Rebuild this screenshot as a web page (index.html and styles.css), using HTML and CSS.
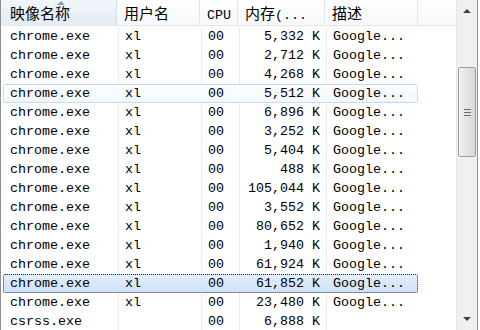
FILE: index.html
```html
<!DOCTYPE html>
<html lang="zh-CN">

<head>
    <meta charset="UTF-8">
    <title>进程</title>
    <link rel="stylesheet" href="styles.css">
</head>

<body>
    <div class="listview">
        <div class="list">
            <!-- 表头 -->
            <div class="header">
                <div class="col sorted"><span class="sort-arrow"></span>映像名称</div>
                <div class="col">用户名</div>
                <div class="col"><span class="ascii">CPU</span></div>
                <div class="col">内存<span class="ascii">(...</span></div>
                <div class="col">描述</div>
                <div class="col filler"></div>
            </div>

            <div class="rows">
                <div class="row"><span>chrome.exe</span><span>xl</span><span>00</span><span class="mem">5,332 K</span><span>Google...</span></div>
                <div class="row"><span>chrome.exe</span><span>xl</span><span>00</span><span class="mem">2,712 K</span><span>Google...</span></div>
                <div class="row"><span>chrome.exe</span><span>xl</span><span>00</span><span class="mem">4,268 K</span><span>Google...</span></div>
                <div class="row hot"><span>chrome.exe</span><span>xl</span><span>00</span><span class="mem">5,512 K</span><span>Google...</span></div>
                <div class="row"><span>chrome.exe</span><span>xl</span><span>00</span><span class="mem">6,896 K</span><span>Google...</span></div>
                <div class="row"><span>chrome.exe</span><span>xl</span><span>00</span><span class="mem">3,252 K</span><span>Google...</span></div>
                <div class="row"><span>chrome.exe</span><span>xl</span><span>00</span><span class="mem">5,404 K</span><span>Google...</span></div>
                <div class="row"><span>chrome.exe</span><span>xl</span><span>00</span><span class="mem">488 K</span><span>Google...</span></div>
                <div class="row"><span>chrome.exe</span><span>xl</span><span>00</span><span class="mem">105,044 K</span><span>Google...</span></div>
                <div class="row"><span>chrome.exe</span><span>xl</span><span>00</span><span class="mem">3,552 K</span><span>Google...</span></div>
                <div class="row"><span>chrome.exe</span><span>xl</span><span>00</span><span class="mem">80,652 K</span><span>Google...</span></div>
                <div class="row"><span>chrome.exe</span><span>xl</span><span>00</span><span class="mem">1,940 K</span><span>Google...</span></div>
                <div class="row"><span>chrome.exe</span><span>xl</span><span>00</span><span class="mem">61,924 K</span><span>Google...</span></div>
                <div class="row selected"><span>chrome.exe</span><span>xl</span><span>00</span><span class="mem">61,852 K</span><span>Google...</span></div>
                <div class="row"><span>chrome.exe</span><span>xl</span><span>00</span><span class="mem">23,480 K</span><span>Google...</span></div>
                <div class="row"><span>csrss.exe</span><span></span><span>00</span><span class="mem">6,888 K</span><span></span></div>
            </div>
        </div>

        <!-- 滚动条 -->
        <div class="scrollbar">
            <div class="arrow up"></div>
            <div class="track">
                <div class="thumb"><span class="grip"></span></div>
            </div>
            <div class="arrow down"></div>
        </div>
    </div>
</body>

</html>
```

FILE: styles.css
```css
body {
    margin: 0;
    width: 480px;
    height: 330px;
    overflow: hidden;
    background-color: #fff;
    color: #000;
}

.listview {
    display: flex;
    width: 476px;
    height: 330px;
    border-left: 1px solid #8e8f8f;
    border-right: 1px solid #8e8f8f;
}

.list {
    flex: 1;
    overflow: hidden;
    background-color: #fff;
}

.header {
    display: grid;
    grid-template-columns: 116px 83px 38px 87px 93px 1fr;
    height: 26px;
    background: linear-gradient(#ffffff, #f7f8fa);
    border-bottom: 1px solid #e4e7eb;
    box-sizing: border-box;
    font-family: "Noto Sans CJK SC", sans-serif;
    font-size: 15px;
    line-height: 25px;
    margin-bottom: 1px;
}

.header .col {
    position: relative;
    padding-left: 7px;
    border-right: 1px solid #e3e6ea;
    white-space: nowrap;
    overflow: hidden;
}

.header .col.sorted {
    padding-left: 9px;
    background: linear-gradient(#f2f6fb, #e3ebf4);
    border-right-color: #d6dde6;
}

.header .col.filler {
    border-right: none;
}

.header .ascii {
    font-family: "Liberation Mono", monospace;
    font-size: 13.33px;
}

.sort-arrow {
    position: absolute;
    top: 1px;
    left: 56px;
    width: 0;
    height: 0;
    border-left: 4px solid transparent;
    border-right: 4px solid transparent;
    border-bottom: 4px solid #8a9bb0;
}

.rows {
    font-family: "Liberation Mono", monospace;
    font-size: 13.33px;
}

.row {
    display: grid;
    grid-template-columns: 114px 83px 38px 87px 93px;
    width: 415px;
    height: 19px;
    margin-left: 2px;
    box-sizing: border-box;
    border: 1px solid transparent;
    border-radius: 2px;
    white-space: nowrap;
    background-image: linear-gradient(to right,
        transparent 114px, #ececec 114px, #ececec 115px, transparent 115px,
        transparent 197px, #ececec 197px, #ececec 198px, transparent 198px,
        transparent 235px, #ececec 235px, #ececec 236px, transparent 236px,
        transparent 322px, #ececec 322px, #ececec 323px, transparent 323px);
}

.row span {
    line-height: 18px;
    padding-left: 7px;
    overflow: hidden;
}

.row span:first-child {
    padding-left: 6px;
}

.row .mem {
    text-align: right;
    padding-left: 0;
    padding-right: 6px;
}

.row.hot {
    border-color: #c6dcf5;
    background: linear-gradient(#fbfdff, #f3f8fd);
}

.row.selected {
    border: 1px dotted #2a2a2a;
    background: linear-gradient(#e3eefc, #cfe2fa);
}

.scrollbar {
    display: flex;
    flex-direction: column;
    width: 20px;
    background-color: #f0f0f0;
    border-left: 1px solid #e6e6e6;
}

.arrow {
    height: 22px;
    display: flex;
    justify-content: center;
    align-items: center;
}

.arrow::after {
    content: "";
    width: 0;
    height: 0;
    border-left: 4px solid transparent;
    border-right: 4px solid transparent;
}

.arrow.up::after {
    border-bottom: 4px solid #404040;
}

.arrow.down::after {
    border-top: 4px solid #404040;
}

.track {
    flex: 1;
    padding-top: 45px;
}

.thumb {
    display: flex;
    justify-content: center;
    align-items: center;
    height: 90px;
    margin: 0 1px 0 1px;
    background: linear-gradient(to right, #f1f1f1, #e4e4e4 50%, #d7d7d7);
    border: 1px solid #9b9b9b;
    border-radius: 2px;
    box-sizing: border-box;
}

.grip {
    width: 7px;
    height: 7px;
    background: repeating-linear-gradient(#6b6b6b 0, #6b6b6b 1px, transparent 1px, transparent 3px);
}
```
